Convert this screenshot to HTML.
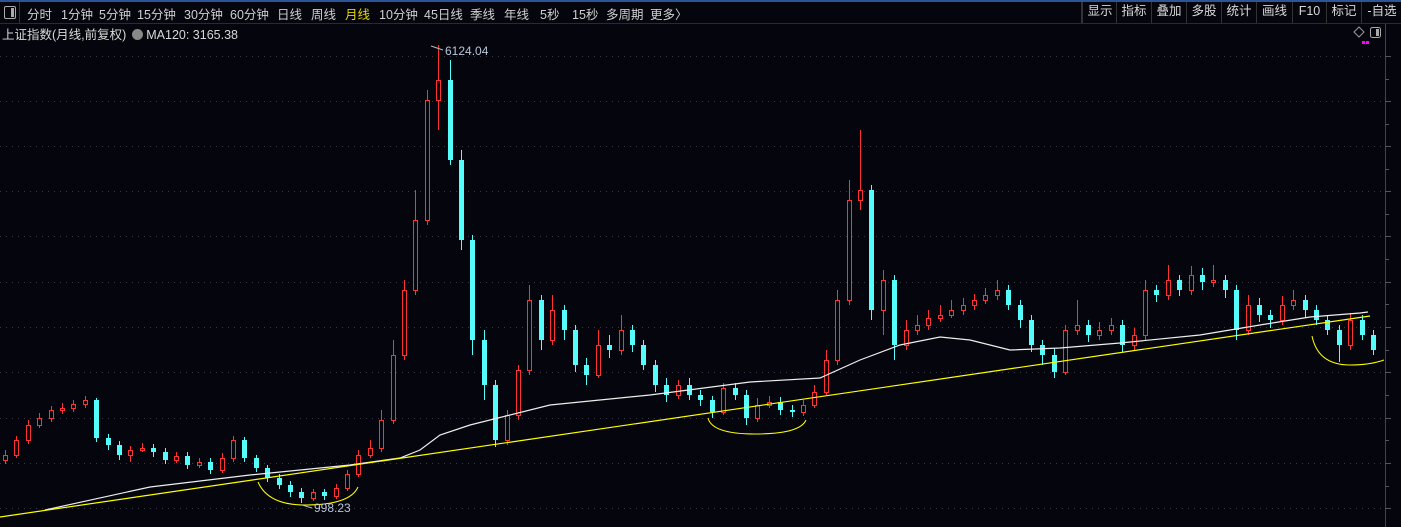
<!DOCTYPE html>
<html><head><meta charset="utf-8"><style>
html,body{margin:0;padding:0;background:#05060d;width:1401px;height:527px;overflow:hidden;font-family:"Liberation Sans","Noto Sans CJK SC",sans-serif;}
#top{position:absolute;left:0;top:0;width:1401px;height:2px;background:#2b5597;}
#bar{position:absolute;left:0;top:2px;width:1401px;height:21px;border-bottom:1px solid #2a2a30;color:#cfcfcf;font-size:12.5px;}
#bar span{position:absolute;top:2px;white-space:nowrap;}
.rb{position:absolute;top:0;height:21px;border-left:1px solid #333;line-height:19px;text-align:center;font-size:12.5px;color:#d8d8d8}
#title{position:absolute;left:2px;top:24px;color:#d8d8d8;font-size:12.5px;z-index:2}
svg{position:absolute;left:0;top:0}
</style></head><body>
<svg width="1401" height="527">
<g stroke="#3a3a44" stroke-dasharray="1,5">
<line x1="0" x2="1385" y1="56.5" y2="56.5"/><line x1="0" x2="1385" y1="101.5" y2="101.5"/><line x1="0" x2="1385" y1="146.5" y2="146.5"/><line x1="0" x2="1385" y1="191.5" y2="191.5"/><line x1="0" x2="1385" y1="236.5" y2="236.5"/><line x1="0" x2="1385" y1="282.5" y2="282.5"/><line x1="0" x2="1385" y1="327.5" y2="327.5"/><line x1="0" x2="1385" y1="372.5" y2="372.5"/><line x1="0" x2="1385" y1="418.5" y2="418.5"/><line x1="0" x2="1385" y1="463.5" y2="463.5"/><line x1="0" x2="1385" y1="508.5" y2="508.5"/>
</g>
<line x1="1385.5" x2="1385.5" y1="24" y2="527" stroke="#444"/>
<path stroke="#555" d="M1385 56.5h6M1385 79.5h4M1385 101.5h6M1385 124.5h4M1385 146.5h6M1385 169.5h4M1385 191.5h6M1385 214.5h4M1385 236.5h6M1385 259.5h4M1385 282.5h6M1385 304.5h4M1385 327.5h6M1385 350.5h4M1385 372.5h6M1385 395.5h4M1385 418.5h6M1385 440.5h4M1385 463.5h6M1385 486.5h4M1385 508.5h6"/>
<path d="M1359 27l5 5-5 5-5-5z" fill="none" stroke="#999"/>
<rect x="1370.5" y="27.5" width="10" height="10" rx="2" fill="none" stroke="#aaa"/><rect x="1376" y="29" width="3" height="7" fill="#aaa"/>
<rect x="1362" y="41" width="3" height="3" fill="#f0f"/><rect x="1366" y="41" width="3" height="3" fill="#f0f"/>

<path stroke="#54fcfc" fill="none" d="M96.5 398V442M108.5 434V450M119.5 441V460M153.5 444V457M165.5 448V464M187.5 452V469M210.5 458V474M244.5 437V462M256.5 455V472M267.5 465V482M279.5 474V489M290.5 481V497M301.5 488V503M324.5 489V500M450.5 60V165M461.5 150V250M472.5 235V355M484.5 330V400M495.5 380V447M541.5 295V350M564.5 305V340M575.5 325V372M586.5 358V385M609.5 335V358M632.5 325V352M643.5 340V370M655.5 360V392M666.5 378V402M689.5 378V400M700.5 390V406M712.5 396V418M735.5 383V400M746.5 390V425M780.5 397V415M792.5 405V417M871.5 185V320M894.5 275V360M1008.5 285V310M1020.5 300V328M1031.5 315V352M1042.5 340V365M1054.5 348V378M1088.5 320V342M1122.5 320V352M1156.5 285V302M1179.5 275V296M1202.5 268V290M1225.5 275V298M1236.5 285V340M1259.5 298V322M1270.5 310V328M1305.5 295V318M1316.5 305V325M1327.5 315V335M1339.5 325V362M1362.5 315V340M1373.5 330V355"/>
<path fill="#54fcfc" d="M94 400h5v38h-5zM106 438h5v7h-5zM117 445h5v10h-5zM151 448h5v4h-5zM163 452h5v8h-5zM185 456h5v9h-5zM208 462h5v8h-5zM242 440h5v18h-5zM254 458h5v10h-5zM265 468h5v10h-5zM277 478h5v7h-5zM288 485h5v7h-5zM299 492h5v6h-5zM322 492h5v4h-5zM448 80h5v80h-5zM459 160h5v80h-5zM470 240h5v100h-5zM482 340h5v45h-5zM493 385h5v55h-5zM539 300h5v40h-5zM562 310h5v20h-5zM573 330h5v35h-5zM584 365h5v10h-5zM607 345h5v5h-5zM630 330h5v15h-5zM641 345h5v20h-5zM653 365h5v20h-5zM664 385h5v10h-5zM687 385h5v10h-5zM698 395h5v5h-5zM710 400h5v12h-5zM733 388h5v7h-5zM744 395h5v23h-5zM778 402h5v8h-5zM790 410h5v2h-5zM869 190h5v120h-5zM892 280h5v65h-5zM1006 290h5v15h-5zM1018 305h5v15h-5zM1029 320h5v25h-5zM1040 345h5v10h-5zM1052 355h5v17h-5zM1086 325h5v10h-5zM1120 325h5v20h-5zM1154 290h5v5h-5zM1177 280h5v10h-5zM1200 275h5v7h-5zM1223 280h5v10h-5zM1234 290h5v40h-5zM1257 305h5v10h-5zM1268 315h5v5h-5zM1303 300h5v10h-5zM1314 310h5v10h-5zM1325 320h5v10h-5zM1337 330h5v15h-5zM1360 320h5v15h-5zM1371 335h5v15h-5z"/>

<path stroke="#ff3232" fill="none" d="M5.5 450V464M16.5 436V458M28.5 420V444M39.5 413V428M51.5 406V422M62.5 403V414M73.5 400V412M85.5 396V408M130.5 446V462M142.5 443V452M176.5 452V463M199.5 458V468M222.5 453V473M233.5 436V462M313.5 489V501M336.5 484V499M347.5 470V491M358.5 450V477M370.5 440V458M381.5 410V452M393.5 340V424M404.5 280V360M415.5 190V295M427.5 90V225M438.5 45V130M507.5 410V445M518.5 365V420M529.5 285V375M552.5 295V345M598.5 330V378M621.5 315V355M678.5 380V399M723.5 383V415M757.5 398V422M769.5 396V408M803.5 400V416M814.5 385V408M826.5 350V395M837.5 290V365M849.5 180V305M860.5 130V210M883.5 270V335M906.5 320V350M917.5 315V335M928.5 310V330M940.5 305V322M951.5 300V318M963.5 298V315M974.5 294V310M985.5 288V304M997.5 280V300M1065.5 325V375M1077.5 300V335M1099.5 322V340M1111.5 318V335M1134.5 328V350M1145.5 280V340M1168.5 265V300M1191.5 266V295M1213.5 265V287M1248.5 295V335M1282.5 296V325M1293.5 290V310M1350.5 313V350"/>
<path stroke="#ff3232" fill="#05060d" d="M3.5 455.5h4v5h-4zM14.5 440.5h4v15h-4zM26.5 425.5h4v15h-4zM37.5 418.5h4v7h-4zM49.5 410.5h4v8h-4zM60.5 408.5h4v2h-4zM71.5 404.5h4v4h-4zM83.5 400.5h4v4h-4zM128.5 450.5h4v5h-4zM140.5 448.5h4v2h-4zM174.5 456.5h4v4h-4zM197.5 462.5h4v3h-4zM220.5 458.5h4v12h-4zM231.5 440.5h4v18h-4zM311.5 492.5h4v6h-4zM334.5 488.5h4v8h-4zM345.5 474.5h4v14h-4zM356.5 455.5h4v19h-4zM368.5 448.5h4v7h-4zM379.5 420.5h4v28h-4zM391.5 355.5h4v65h-4zM402.5 290.5h4v65h-4zM413.5 220.5h4v70h-4zM425.5 100.5h4v120h-4zM436.5 80.5h4v20h-4zM505.5 415.5h4v25h-4zM516.5 370.5h4v45h-4zM527.5 300.5h4v70h-4zM550.5 310.5h4v30h-4zM596.5 345.5h4v30h-4zM619.5 330.5h4v20h-4zM676.5 385.5h4v10h-4zM721.5 388.5h4v24h-4zM755.5 405.5h4v13h-4zM767.5 402.5h4v3h-4zM801.5 405.5h4v7h-4zM812.5 392.5h4v13h-4zM824.5 360.5h4v32h-4zM835.5 300.5h4v60h-4zM847.5 200.5h4v100h-4zM858.5 190.5h4v10h-4zM881.5 280.5h4v30h-4zM904.5 330.5h4v15h-4zM915.5 325.5h4v5h-4zM926.5 318.5h4v7h-4zM938.5 315.5h4v3h-4zM949.5 310.5h4v5h-4zM961.5 305.5h4v5h-4zM972.5 300.5h4v5h-4zM983.5 295.5h4v5h-4zM995.5 290.5h4v5h-4zM1063.5 330.5h4v42h-4zM1075.5 325.5h4v5h-4zM1097.5 330.5h4v5h-4zM1109.5 325.5h4v5h-4zM1132.5 335.5h4v10h-4zM1143.5 290.5h4v45h-4zM1166.5 280.5h4v15h-4zM1189.5 275.5h4v15h-4zM1211.5 280.5h4v2h-4zM1246.5 305.5h4v25h-4zM1280.5 305.5h4v15h-4zM1291.5 300.5h4v5h-4zM1348.5 320.5h4v25h-4z"/>

<polyline fill="none" stroke="#eee" stroke-width="1.2" points="45,510 150,487 250,475 350,465 400,458 420,450 440,435 470,425 550,405 650,395 750,382 820,378 860,360 900,345 940,337 970,340 1010,350 1060,348 1120,343 1200,335 1260,325 1310,317 1360,313 1368,312"/>
<line x1="0" y1="517" x2="1370" y2="316" stroke="#ffff00" stroke-width="1.2"/>
<path d="M258 482Q268 505 305 505Q350 505 358 487" fill="none" stroke="#ffff00"/>
<path d="M708 418Q712 434 755 434Q800 434 806 420" fill="none" stroke="#ffff00"/>
<path d="M1312 336Q1318 365 1350 365Q1370 365 1384 360" fill="none" stroke="#ffff00"/>
<text x="445" y="55" fill="#b8c4d8" font-size="12" font-family="Liberation Sans">6124.04</text><path d="M431 46L443 50" stroke="#bbb" fill="none"/>
<text x="314" y="512" fill="#b8c4d8" font-size="12" font-family="Liberation Sans">998.23</text><path d="M302 505L312 508" stroke="#bbb" fill="none"/>
</svg>
<div id="top"></div>
<div id="bar">
<div style="position:absolute;left:4px;top:4px;width:10px;height:11px;border:1px solid #aaa;border-radius:2px"><div style="position:absolute;right:1px;top:1px;width:3px;height:9px;background:#aaa"></div></div>
<div style="position:absolute;left:19px;top:0;width:1px;height:21px;background:#333"></div>
<span style="left:27px">分时</span><span style="left:61px">1分钟</span><span style="left:99px">5分钟</span><span style="left:137px">15分钟</span><span style="left:184px">30分钟</span><span style="left:230px">60分钟</span><span style="left:277px">日线</span><span style="left:311px">周线</span><span style="left:345px;color:#e6d800">月线</span><span style="left:379px">10分钟</span><span style="left:424px">45日线</span><span style="left:470px">季线</span><span style="left:504px">年线</span><span style="left:540px">5秒</span><span style="left:572px">15秒</span><span style="left:606px">多周期</span><span style="left:650px">更多〉</span>
<div class="rb" style="left:1081px;width:34px;border-left:2px solid #333">显示</div>
<div class="rb" style="left:1116px;width:34px">指标</div>
<div class="rb" style="left:1151px;width:34px">叠加</div>
<div class="rb" style="left:1186px;width:34px">多股</div>
<div class="rb" style="left:1221px;width:34px">统计</div>
<div class="rb" style="left:1256px;width:35px">画线</div>
<div class="rb" style="left:1292px;width:33px">F10</div>
<div class="rb" style="left:1326px;width:34px">标记</div>
<div class="rb" style="left:1361px;width:40px">-自选</div>
</div>
<div id="title">上证指数(月线,前复权) <span style="display:inline-block;width:11px;height:11px;border-radius:6px;background:#888;vertical-align:-1px;margin-left:2px"></span> MA120: 3165.38</div>
</body></html>
